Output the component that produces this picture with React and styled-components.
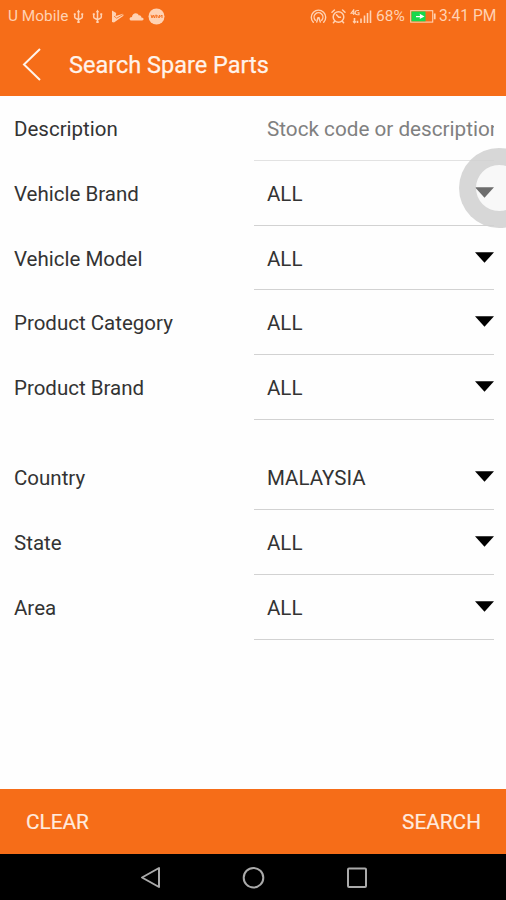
import React from 'react';
import styled, { createGlobalStyle } from 'styled-components';

const ORANGE = '#f66d18';
const TINT = '#ffd2b3';

const GlobalStyle = createGlobalStyle`
  * { box-sizing: border-box; }
  body { margin: 0; background: #fff; font-family: Roboto, "Liberation Sans", sans-serif; }
`;

const Screen = styled.div`
  position: relative;
  display: flex;
  flex-direction: column;
  width: 506px;
  height: 900px;
  overflow: hidden;
  background: #fefefe;
`;

const StatusBar = styled.div`
  display: flex;
  justify-content: space-between;
  height: 32px;
  padding: 0 9px 0 8px;
  background: ${ORANGE};
  color: ${TINT};
  line-height: 33px;
`;

const StatusGroup = styled.div`
  display: flex;
  align-items: center;
`;

const StatusText = styled.span`
  width: ${(p) => p.$width}px;
  margin-left: ${(p) => p.$gap || 0}px;
  font-size: ${(p) => p.$size}px;
  white-space: nowrap;
`;

const Glyph = styled.svg`
  display: block;
  flex: none;
  margin-left: ${(p) => p.$gap || 0}px;
`;

const TitleBar = styled.header`
  display: flex;
  align-items: center;
  height: 64px;
  padding: 1px 0 0 22px;
  background: ${ORANGE};
  color: #fff3ea;
`;

const BackButton = styled.button`
  width: 47px;
  height: 40px;
  padding: 0;
  border: 0;
  background: none;
`;

const Title = styled.h1`
  margin: 0;
  font-size: 23.5px;
  font-weight: 400;
  line-height: 32px;
  -webkit-text-stroke: 0.25px currentColor;
`;

const Form = styled.main`
  flex: 1;
  display: flex;
  flex-direction: column;
  gap: 25.3px;
`;

const FieldGroup = styled.section`
  display: flex;
  flex-direction: column;
`;

const Row = styled.div`
  display: flex;
  height: 64.8px;
  padding: 0 12px 0 14px;
`;

const Label = styled.label`
  width: 240px;
  padding-top: 1px;
  font-size: 20.5px;
  line-height: 64px;
  color: #333;
`;

const Field = styled.div`
  flex: 1;
  display: flex;
  justify-content: space-between;
  min-width: 0;
  padding-left: 13px;
  border-bottom: 1px solid ${(p) => (p.$faint ? '#e2e2e2' : '#d2d2d2')};
  overflow: hidden;
`;

const Value = styled.span`
  padding-top: 1px;
  font-size: ${(p) => (p.$hint ? 20.7 : 20.5)}px;
  line-height: 64px;
  white-space: nowrap;
  color: ${(p) => (p.$hint ? '#808080' : '#333')};
`;

const Caret = styled.svg`
  display: block;
  flex: none;
  margin-top: 26px;
`;

const ActionBar = styled.footer`
  display: flex;
  align-items: center;
  justify-content: space-between;
  height: 65px;
  padding: 1px 25px 0 26px;
  background: ${ORANGE};
`;

const Action = styled.button`
  padding: 0;
  border: 0;
  background: none;
  color: #ffeade;
  font: 400 20.8px/30px Roboto, sans-serif;
  -webkit-text-stroke: 0.2px currentColor;
`;

const NavBar = styled.nav`
  display: flex;
  justify-content: center;
  gap: 81px;
  height: 46px;
  padding-top: 12px;
  background: #000;
`;

const TouchBubble = styled.div`
  position: absolute;
  left: 459px;
  top: 148px;
  width: 80px;
  height: 80px;
  border: 17px solid rgba(208, 208, 208, 0.86);
  border-radius: 50%;
  background: rgba(242, 242, 242, 0.45);
  background-clip: padding-box;
`;

const Usb = ({ gap }) => (
  <Glyph $gap={gap} width="11" height="15" viewBox="0 0 11 15" fill="none" stroke={TINT} strokeWidth="1.5">
    <path d="M5.5 2v11M1.7 5v3.2c0 1.6 3.8 1.4 3.8 3M9.3 5v3.2c0 1.6-3.8 1.4-3.8 3" />
    <path d="M3.8 3.2 5.5.5l1.7 2.7ZM.8 4.3h1.9v1.8H.8ZM8.3 4.3h1.9v1.8H8.3ZM4.3 12.2h2.4v1.8H4.3Z" fill={TINT} stroke="none" />
  </Glyph>
);

const Select = ({ label, value, hint }) => (
  <Row>
    <Label>{label}</Label>
    <Field $faint={hint}>
      <Value $hint={hint}>{value}</Value>
      {!hint && (
        <Caret width="19" height="11" viewBox="0 0 19 11">
          <path d="M0 .3h19L9.5 10.7Z" fill="#000" />
        </Caret>
      )}
    </Field>
  </Row>
);

const VEHICLE = ['Vehicle Brand', 'Vehicle Model', 'Product Category', 'Product Brand'];
const REGION = [['Country', 'MALAYSIA'], ['State', 'ALL'], ['Area', 'ALL']];

export default function App() {
  return (
    <Screen>
      <GlobalStyle />
      <StatusBar>
        <StatusGroup>
          <StatusText $width={62} $size={15.4}>U Mobile</StatusText>
          <Usb gap={3} />
          <Usb gap={8} />
          <Glyph $gap={8} width="13" height="13" viewBox="0 0 13 13" fill={TINT}>
            <path d="M1 .5 5.2 3l-.5 3L12 3.8l.5 2L3 12.5 1 12Z" />
            <path d="m3 6.2 2.7 2L12 4.5" fill="none" stroke={ORANGE} strokeWidth=".8" />
          </Glyph>
          <Glyph $gap={5} width="15" height="9" viewBox="0 0 15 9" fill={TINT}>
            <path d="M2.5 8.5C-.3 8.4 0 5 3 5c0-4 5.6-5.4 6.8-1.6 1.7-.3 2.5.8 2.6 2 2.7 0 2.8 3 .7 3.1Z" />
          </Glyph>
          <Glyph $gap={4} width="17" height="17" viewBox="0 0 17 17">
            <circle cx="8.5" cy="8.5" r="8" fill={TINT} />
            <path d="m3 6.8 1 3.2 1.2-3 1.2 3 1-3.2M8.3 10V7l2 1.5V10M11.4 10V7l1.3 1.5L14 7v3" fill="none" stroke={ORANGE} strokeWidth=".9" />
          </Glyph>
        </StatusGroup>
        <StatusGroup>
          <Glyph width="17" height="15" viewBox="0 0 17 15" fill="none" stroke={TINT} strokeWidth="1.4" strokeLinecap="round">
            <path d="M3.3 13.3a7.2 7.2 0 1 1 10.4 0M5.3 11.2a4.4 4.4 0 1 1 6.4 0" />
            <path d="M6.7 13l1.3-4.2h1l1.3 4.2" />
          </Glyph>
          <Glyph $gap={4} width="15" height="15" viewBox="0 0 15 15" fill="none" stroke={TINT} strokeWidth="1.5" strokeLinecap="round">
            <circle cx="7.5" cy="8" r="5.3" />
            <path d="M1 3.2 3.4 1M14 3.2 11.6 1M3.7 12.3l-1.3 1.5M11.3 12.3l1.3 1.5M5.5 5.8l2.2 2.5h1.8" />
          </Glyph>
          <Glyph $gap={4} width="22" height="15" viewBox="0 0 22 15" fill="none" stroke={TINT}>
            <path d="M3.7 6V.8L1 4.3h3.8M9 1.5H7.3a1.8 1.8 0 0 0 0 4.2H9V3.8H7.5" strokeWidth="1.1" />
            <path d="M4.5 9v4.5m-1.4-1.3 1.4 1.4 1.3-1.4M7.5 14v-2.3M11 14V9.5M14.5 14V6.5M17.5 14V4M20.5 14V1.5" strokeWidth="1.6" />
          </Glyph>
          <StatusText $gap={4} $width={32} $size={15.5}>68%</StatusText>
          <Glyph $gap={2} width="28" height="13" viewBox="0 0 28 13" fill="none">
            <rect x=".7" y=".7" width="22" height="11.4" stroke={TINT} strokeWidth="1.1" />
            <rect x="1.5" y="1.5" width="14" height="9.8" fill="#16d84c" />
            <path d="M24.7 3.5v5.8" stroke={TINT} strokeWidth="1.8" />
            <path d="M6 5.9h4L9.7 3.7l4.8 2.8-4.8 2.6.3-1.9H6Z" fill="#fff" />
          </Glyph>
          <StatusText $gap={1} $width={58} $size={15.6}>3:41 PM</StatusText>
        </StatusGroup>
      </StatusBar>
      <TitleBar>
        <BackButton aria-label="Back">
          <Glyph width="20" height="40" viewBox="0 0 20 40" fill="none" stroke="#fff3ea" strokeWidth="2">
            <path d="M18 4 2 19.5l16 15.5" />
          </Glyph>
        </BackButton>
        <Title>Search Spare Parts</Title>
      </TitleBar>
      <Form>
        <FieldGroup>
          <Select label="Description" value="Stock code or description" hint />
          {VEHICLE.map((name) => <Select key={name} label={name} value="ALL" />)}
        </FieldGroup>
        <FieldGroup>
          {REGION.map(([name, value]) => <Select key={name} label={name} value={value} />)}
        </FieldGroup>
      </Form>
      <ActionBar>
        <Action>CLEAR</Action>
        <Action>SEARCH</Action>
      </ActionBar>
      <NavBar>
        <Glyph width="22" height="24" viewBox="0 0 22 24" fill="none" stroke="#aaa" strokeWidth="2" strokeLinejoin="round">
          <path d="M21 2v19L4 11.5Z" />
        </Glyph>
        <Glyph width="24" height="24" viewBox="0 0 24 24" fill="none" stroke="#aaa" strokeWidth="2">
          <circle cx="12.5" cy="11.7" r="9.8" />
        </Glyph>
        <Glyph width="22" height="24" viewBox="0 0 22 24" fill="none" stroke="#aaa" strokeWidth="2">
          <rect x="2" y="2.5" width="18" height="18.5" rx="1" />
        </Glyph>
      </NavBar>
      <TouchBubble />
    </Screen>
  );
}
